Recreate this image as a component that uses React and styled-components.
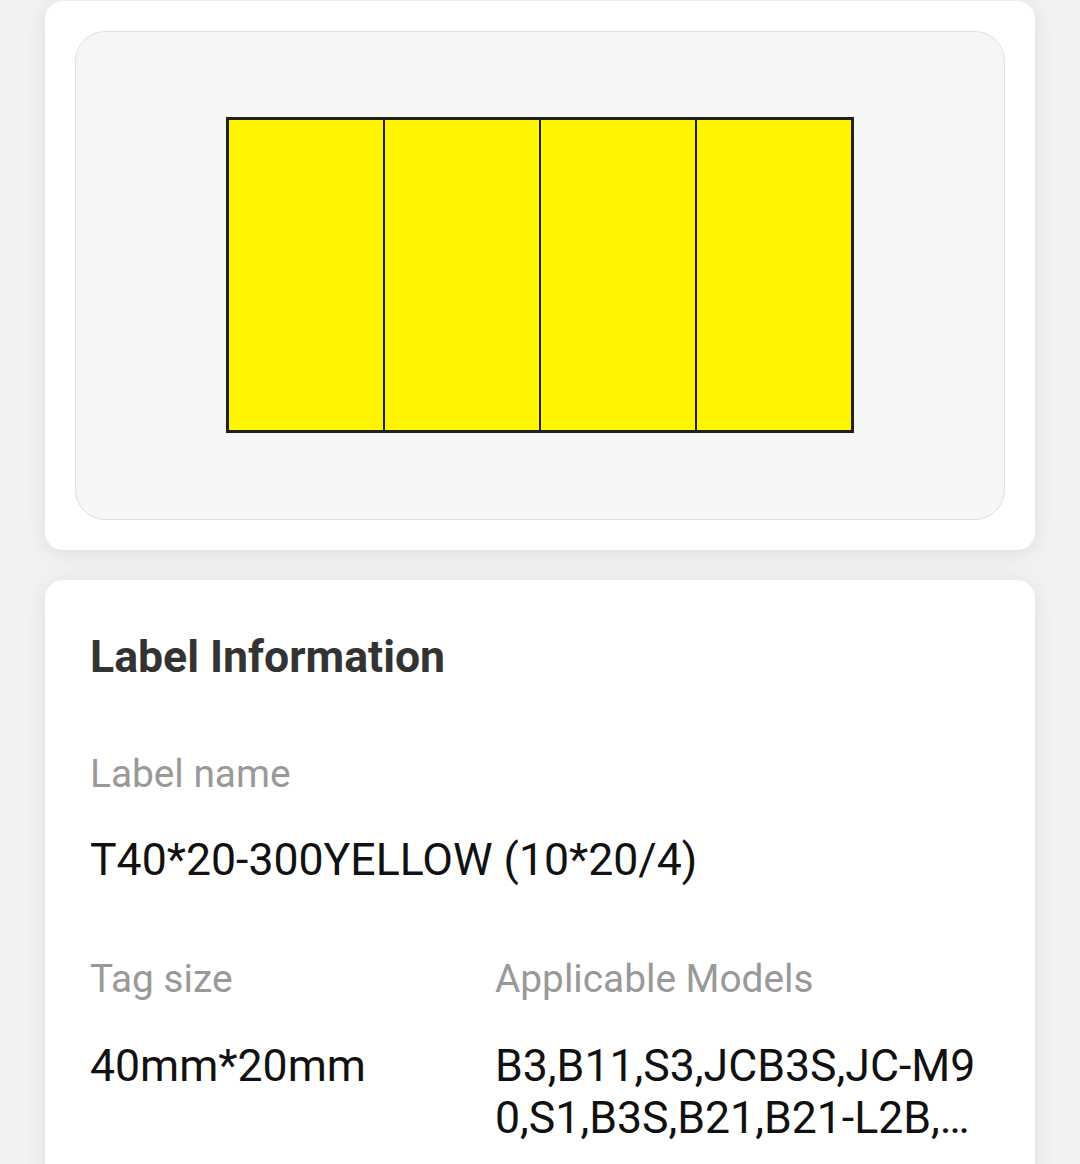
import React from "react";
import styled, { createGlobalStyle } from "styled-components";

const GlobalStyle = createGlobalStyle`
  html, body {
    margin: 0;
    padding: 0;
    background: #f2f2f2;
    font-family: Roboto, "Noto Sans", "Liberation Sans", sans-serif;
  }
  * { box-sizing: border-box; }
`;

const Page = styled.div`
  display: flex;
  flex-direction: column;
  gap: 30px;
  padding: 1px 45px 0;
  height: 1164px;
  overflow: hidden;
`;

const Card = styled.section`
  background: #ffffff;
  border-radius: 18px;
  box-shadow: 0 3px 22px rgba(0, 0, 0, 0.09);
  flex-shrink: 0;
`;

const PreviewCard = styled(Card)`
  height: 549px;
  padding: 30px;
  display: flex;
`;

const PreviewArea = styled.div`
  flex: 1;
  background: #f6f6f6;
  border: 1px solid #e0e0e0;
  border-radius: 30px;
  display: flex;
  align-items: center;
  justify-content: center;
`;

const LabelSheet = styled.div`
  width: 628px;
  height: 316px;
  margin-top: -2px;
  background: #222018;
  border: 3px solid #222018;
  display: grid;
  grid-template-columns: repeat(4, 1fr);
  column-gap: 2.5px;
`;

const Cell = styled.div`
  background: #fff500;
`;

const InfoCard = styled(Card)`
  padding: 51px 45px 60px;
`;

const Title = styled.h2`
  margin: 0 0 67px;
  font-size: 44.6px;
  font-weight: 700;
  line-height: 52.7px;
  color: #333333;
`;

const Fields = styled.div`
  display: grid;
  grid-template-columns: 405px 1fr;
  row-gap: 69px;
`;

const Field = styled.div`
  grid-column: ${(p) => (p.$full ? "1 / -1" : "auto")};
  display: flex;
  flex-direction: column;
  gap: 38px;
  min-width: 0;
`;

const FieldLabel = styled.div`
  font-size: 38.8px;
  line-height: 45.7px;
  color: #999999;
`;

const FieldValue = styled.div`
  font-size: 44.6px;
  line-height: 52.5px;
  color: #111111;
  word-break: break-all;
`;

export default function App() {
  return (
    <>
      <GlobalStyle />
      <Page>
        <PreviewCard>
          <PreviewArea>
            <LabelSheet>
              {[0, 1, 2, 3].map((i) => (
                <Cell key={i} />
              ))}
            </LabelSheet>
          </PreviewArea>
        </PreviewCard>
        <InfoCard>
          <Title>Label Information</Title>
          <Fields>
            <Field $full>
              <FieldLabel>Label name</FieldLabel>
              <FieldValue>T40*20-300YELLOW (10*20/4)</FieldValue>
            </Field>
            <Field>
              <FieldLabel>Tag size</FieldLabel>
              <FieldValue>40mm*20mm</FieldValue>
            </Field>
            <Field>
              <FieldLabel>Applicable Models</FieldLabel>
              <FieldValue>B3,B11,S3,JCB3S,JC-M90,S1,B3S,B21,B21-L2B,…</FieldValue>
            </Field>
          </Fields>
        </InfoCard>
      </Page>
    </>
  );
}
